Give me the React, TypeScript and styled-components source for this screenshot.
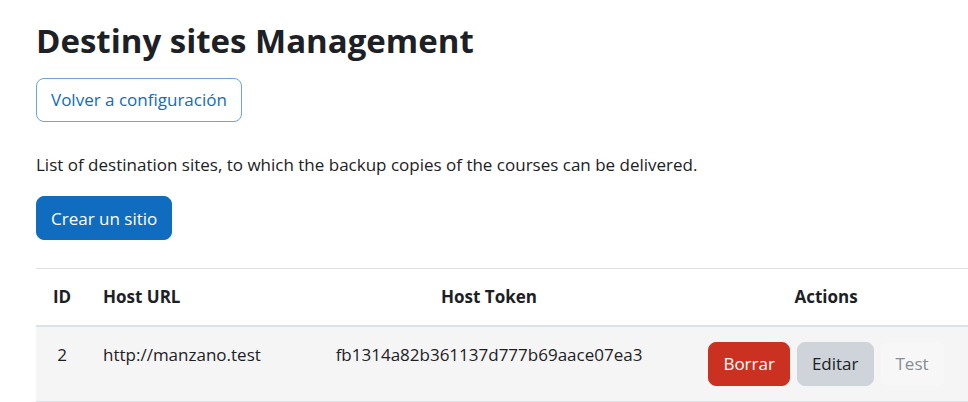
import styled, { createGlobalStyle } from 'styled-components';

const GlobalStyle = createGlobalStyle`
  body {
    margin: 0;
    overflow: hidden;
    background: #fff;
    color: #1d2125;
    font-family: "Open Sans", "Noto Sans", sans-serif;
    font-size: 17px;
    line-height: 1.5;
  }
`;

const Page = styled.main`
  padding: 21px 0 0 36px;
  width: 958px;
`;

const Title = styled.h2`
  margin: 0 0 17px;
  font-size: 33px;
  font-weight: 700;
  line-height: 1.2;
`;

const Button = styled.button<{ $variant: 'outline' | 'primary' | 'danger' | 'secondary' | 'disabled' }>`
  font-family: inherit;
  font-size: 17px;
  line-height: 27px;
  padding: 7.5px 14px;
  border-radius: 8px;
  border: 1px solid transparent;
  cursor: pointer;
  color: ${({ $variant }) =>
    $variant === 'outline' ? '#0f6cbf' :
    $variant === 'secondary' ? '#1d2125' :
    $variant === 'disabled' ? '#878d94' : '#fff'};
  background: ${({ $variant }) =>
    $variant === 'primary' ? '#0f6cbf' :
    $variant === 'danger' ? '#ca3120' :
    $variant === 'secondary' ? '#ced4da' :
    $variant === 'disabled' ? 'rgba(255,255,255,0.25)' : '#fff'};
  border-color: ${({ $variant }) =>
    $variant === 'outline' ? '#6ea4d6' :
    $variant === 'primary' ? '#0f6cbf' :
    $variant === 'danger' ? '#ca3120' :
    $variant === 'secondary' ? '#ced4da' : 'transparent'};
`;

const Intro = styled.p`
  margin: 30px 0 19px;
`;

const Table = styled.table`
  margin-top: 28px;
  width: 958px;
  border-collapse: collapse;
  table-layout: fixed;
`;

const Th = styled.th<{ $align?: 'left' | 'center'; $width: number }>`
  box-sizing: border-box;
  width: ${({ $width }) => $width}px;
  text-align: ${({ $align }) => $align ?? 'left'};
  font-weight: 700;
  padding: 15px;
  border-top: 1px solid #dee2e6;
  border-bottom: 2px solid #dee2e6;
`;

const Row = styled.tr`
  background: #f5f5f5;
`;

const Td = styled.td<{ $align?: 'left' | 'center' }>`
  text-align: ${({ $align }) => $align ?? 'left'};
  vertical-align: top;
  padding: 15px;
  border-bottom: 1px solid #dee2e6;
`;

const Actions = styled.div`
  display: flex;
  justify-content: center;
  gap: 7px;
`;

export default function App() {
  return (
    <>
      <GlobalStyle />
      <Page>
        <Title>Destiny sites Management</Title>
        <Button $variant="outline">Volver a configuración</Button>
        <Intro>List of destination sites, to which the backup copies of the courses can be delivered.</Intro>
        <Button $variant="primary">Crear un sitio</Button>
        <Table>
          <thead>
            <tr>
              <Th $align="center" $width={52}>ID</Th>
              <Th $width={232}>Host URL</Th>
              <Th $align="center" $width={338}>Host Token</Th>
              <Th $align="center" $width={336}>Actions</Th>
            </tr>
          </thead>
          <tbody>
            <Row>
              <Td $align="center">2</Td>
              <Td>http://manzano.test</Td>
              <Td $align="center">fb1314a82b361137d777b69aace07ea3</Td>
              <Td>
                <Actions>
                  <Button $variant="danger">Borrar</Button>
                  <Button $variant="secondary">Editar</Button>
                  <Button $variant="disabled">Test</Button>
                </Actions>
              </Td>
            </Row>
          </tbody>
        </Table>
      </Page>
    </>
  );
}
